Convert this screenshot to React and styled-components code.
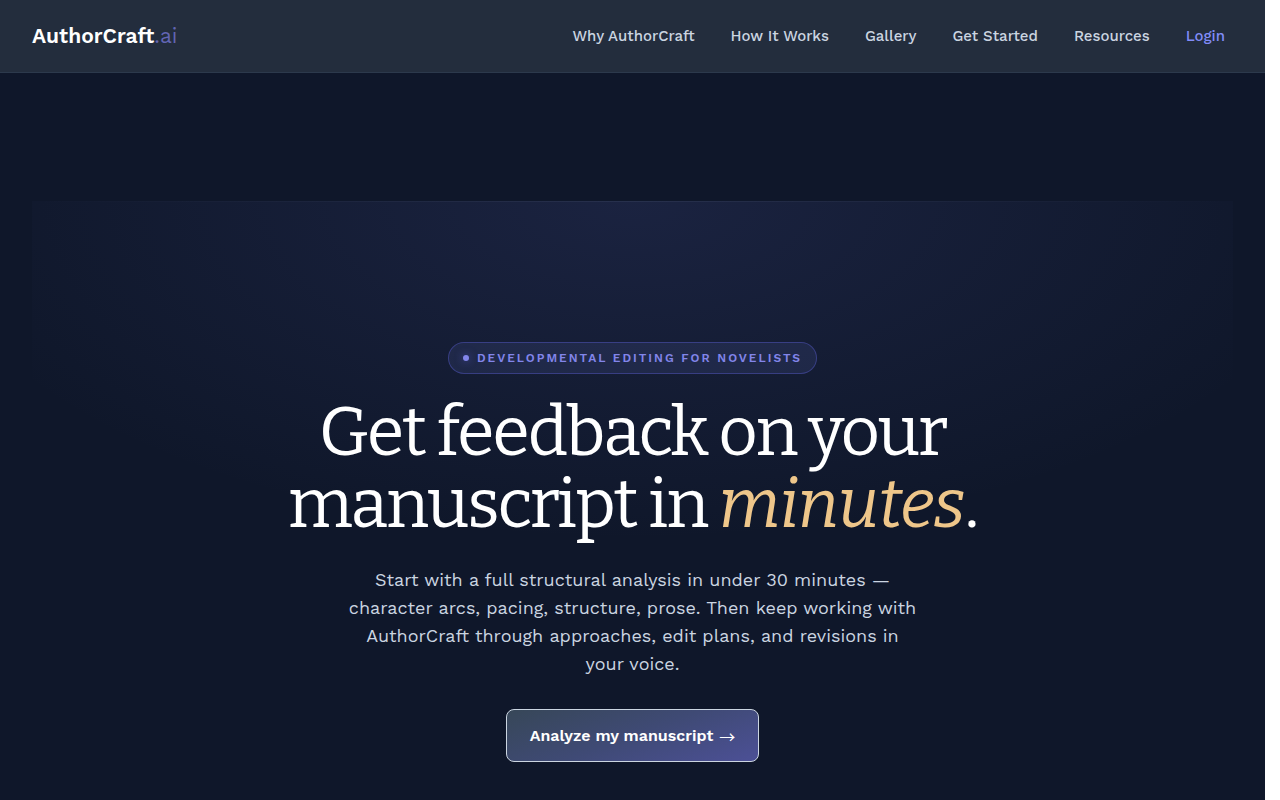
import * as React from 'react'
import styled, { createGlobalStyle, ThemeProvider } from 'styled-components'

const theme = {
  colors: {
    page: '#0f172a',
    header: '#232d3d',
    line: '#2c394c',
    white: '#ffffff',
    text: '#cbd5e1',
    primary: '#818cf8',
    lavender: '#8285ea',
    muted: '#6265b4',
    accent: '#eec68a',
  },
  fonts: {
    sans: '"Work Sans", Inter, "Liberation Sans", sans-serif',
    serif: 'Bitter, "DejaVu Serif", serif',
    symbol: '"Noto Sans CJK JP", sans-serif',
  },
}

const GlobalStyle = createGlobalStyle`
  *, *::before, *::after {
    box-sizing: border-box;
  }

  html {
    background: #ffffff;
  }

  body {
    margin: 0;
    padding-right: 15px;
    font-family: ${props => props.theme.fonts.sans};
    -webkit-font-smoothing: antialiased;
  }
`

const Page = styled.div`
  min-height: 100vh;
  background-color: ${props => props.theme.colors.page};
  color: ${props => props.theme.colors.text};
`

const Header = styled.header`
  display: flex;
  align-items: center;
  justify-content: space-between;
  height: 73px;
  padding: 0 40px 0 32px;
  background-color: ${props => props.theme.colors.header};
  border-bottom: 1px solid ${props => props.theme.colors.line};
`

const Logo = styled.a`
  color: ${props => props.theme.colors.white};
  font-size: 21px;
  font-weight: 600;
  line-height: 24px;
  text-decoration: none;
`

const LogoSuffix = styled.span`
  color: ${props => props.theme.colors.muted};
  font-weight: 400;
`

const Nav = styled.nav`
  display: flex;
  gap: 36px;
`

const NavLink = styled.a`
  color: ${props =>
    props.$highlight ? props.theme.colors.primary : props.theme.colors.text};
  font-size: 15px;
  font-weight: 500;
  line-height: 24px;
  text-decoration: none;
  white-space: nowrap;
`

const Main = styled.main`
  padding: 128px 32px 0;
`

const Hero = styled.section`
  display: flex;
  flex-direction: column;
  align-items: center;
  padding: 141px 24px 38px;
  text-align: center;
  background:
    linear-gradient(
      90deg,
      rgba(148, 163, 184, 0),
      rgba(148, 163, 184, 0.1),
      rgba(148, 163, 184, 0)
    ) top / 100% 1px no-repeat,
    radial-gradient(
      ellipse 60% 340px at 50% 0,
      rgba(105, 115, 215, 0.13),
      rgba(105, 115, 215, 0)
    );
`

const Badge = styled.p`
  display: flex;
  align-items: center;
  gap: 8px;
  height: 32px;
  margin: 0;
  padding: 0 14px;
  color: ${props => props.theme.colors.lavender};
  background-color: rgba(115, 130, 220, 0.12);
  border: 1px solid rgba(99, 102, 241, 0.35);
  border-radius: 16px;
  font-size: 12px;
  font-weight: 600;
  letter-spacing: 2px;
  text-transform: uppercase;
`

const BadgeDot = styled.span`
  width: 6px;
  height: 6px;
  border-radius: 50%;
  background-color: ${props => props.theme.colors.lavender};
  box-shadow: 0 0 8px rgba(99, 102, 241, 0.6);
`

const Title = styled.h1`
  max-width: 760px;
  margin: 22px 0 26px;
  color: ${props => props.theme.colors.white};
  font-family: ${props => props.theme.fonts.serif};
  font-size: 68px;
  font-weight: 400;
  line-height: 72px;
  letter-spacing: -2px;
`

const Accent = styled.em`
  color: ${props => props.theme.colors.accent};
  letter-spacing: -1px;
`

const Lead = styled.p`
  max-width: 572px;
  margin: 0 0 31px;
  font-size: 18px;
  line-height: 28px;
`

const CtaButton = styled.button`
  display: flex;
  align-items: center;
  gap: 6px;
  height: 53px;
  padding: 0 23px;
  color: ${props => props.theme.colors.white};
  background: linear-gradient(160deg, #374758, #3f4a75 50%, #4c5096);
  border: 1px solid ${props => props.theme.colors.text};
  border-radius: 8px;
  font-family: inherit;
  font-size: 16px;
  font-weight: 600;
  cursor: pointer;
`

const Arrow = styled.span`
  font-family: ${props => props.theme.fonts.symbol};
  font-weight: 400;
  line-height: 20px;
`

const links = [
  { label: 'Why AuthorCraft', href: '#why' },
  { label: 'How It Works', href: '#how' },
  { label: 'Gallery', href: '#gallery' },
  { label: 'Get Started', href: '#start' },
  { label: 'Resources', href: '#resources' },
  { label: 'Login', href: '#login', highlight: true },
]

const App = () => (
  <ThemeProvider theme={theme}>
    <GlobalStyle />
    <Page>
      <Header>
        <Logo href="#home">
          AuthorCraft<LogoSuffix>.ai</LogoSuffix>
        </Logo>
        <Nav>
          {links.map(({ label, href, highlight }) => (
            <NavLink key={href} href={href} $highlight={highlight}>
              {label}
            </NavLink>
          ))}
        </Nav>
      </Header>
      <Main>
        <Hero>
          <Badge>
            <BadgeDot />
            Developmental editing for novelists
          </Badge>
          <Title>
            Get feedback on your manuscript in <Accent>minutes</Accent>.
          </Title>
          <Lead>
            Start with a full structural analysis in under 30 minutes —
            character arcs, pacing, structure, prose. Then keep working with
            AuthorCraft through approaches, edit plans, and revisions in your
            voice.
          </Lead>
          <CtaButton type="button">
            Analyze my manuscript <Arrow>→</Arrow>
          </CtaButton>
        </Hero>
      </Main>
    </Page>
  </ThemeProvider>
)

export default App
